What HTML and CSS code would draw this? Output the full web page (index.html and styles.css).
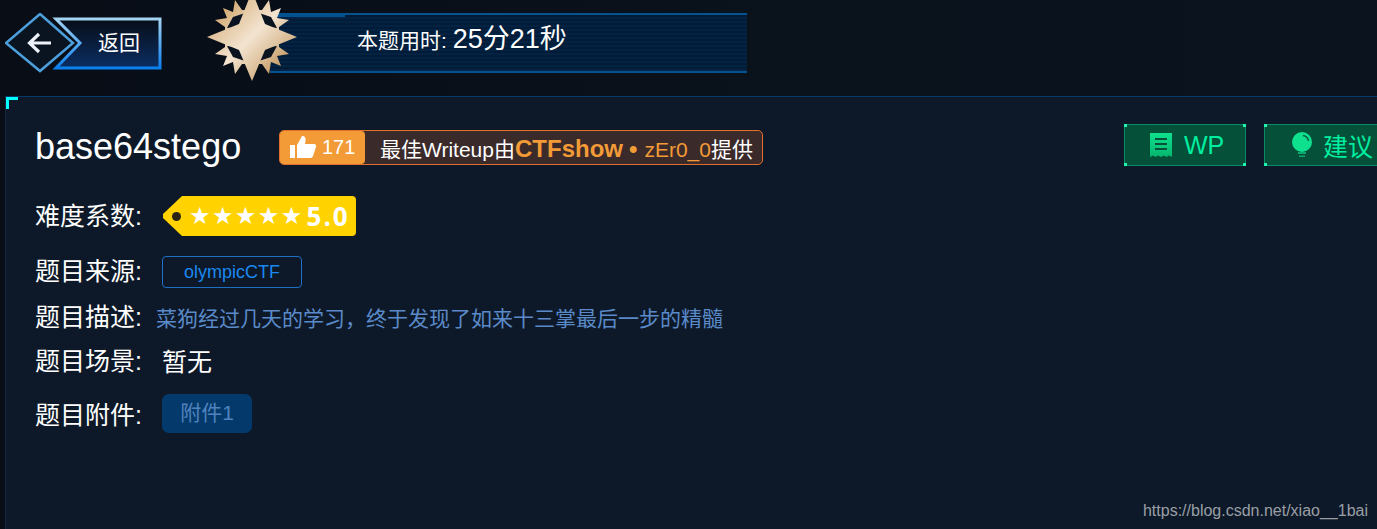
FILE: index.html
```html
<!DOCTYPE html>
<html lang="zh-CN">
<head>
  <meta charset="UTF-8" />
  <title>base64stego</title>
  <link rel="stylesheet" href="styles.css">
</head>
<body>

<header class="top">
  <a class="back">
    <svg class="back-shape" width="157" height="60" viewBox="0 0 157 60">
      <defs>
        <linearGradient id="backEdge" x1="0" y1="0" x2="0" y2="1">
          <stop offset="0" stop-color="#a5d4f2" />
          <stop offset="1" stop-color="#0a7fee" />
        </linearGradient>
        <linearGradient id="backFill" x1="0" y1="0" x2="0" y2="1">
          <stop offset="0" stop-color="#070d17" />
          <stop offset="1" stop-color="#0b2e63" />
        </linearGradient>
      </defs>
      <polygon points="51,6 155,6 155,55 51,55 75,30" fill="url(#backFill)" stroke="url(#backEdge)" stroke-width="3" />
      <polygon points="35,1 68,30 35,58 1,30" fill="#0a1420" stroke="#4d9fdc" stroke-width="2.5" />
      <path d="M24 30H46M34 21L24.500 30L34 39" fill="none" stroke="#eef2f8" stroke-width="3.200" />
    </svg>
    <span class="back-label">返回</span>
  </a>

  <div class="time-bar">
    <svg class="medal" width="92" height="86" viewBox="0 0 92 86">
      <defs>
        <linearGradient id="gold" x1="0.1" y1="0.1" x2="0.9" y2="0.9">
          <stop offset="0" stop-color="#d2a871" />
          <stop offset="0.5" stop-color="#f3e4d0" />
          <stop offset="1" stop-color="#c49a64" />
        </linearGradient>
      </defs>
      <polygon fill="url(#gold)" points="36,15 29,5 27,17 17,13 21,23 9,25 19,32 19,52 9,59 21,61 17,71 27,67 29,79 36,69 56,69 63,79 65,67 75,71 71,61 83,59 73,52 73,32 83,25 71,23 75,13 65,17 63,5 56,15" />
      <g fill="#0a1320">
        <polygon points="21,33 27,22 39,18 37,25 31,32" />
        <polygon points="71,33 65,22 53,18 55,25 61,32" />
        <polygon points="21,51 27,62 39,66 37,59 31,52" />
        <polygon points="71,51 65,62 53,66 55,59 61,52" />
      </g>
      <polygon fill="url(#gold)" points="46,-4 59,29 91,42 59,55 46,86 33,55 1,42 33,29" />
    </svg>
    <p class="time-text">本题用时: <span class="time-value">25分21秒</span></p>
  </div>
</header>

<main class="panel">
  <span class="corner"></span>

  <div class="title-row">
    <h1 class="title">base64stego</h1>
    <div class="writeup">
      <span class="likes">
        <svg width="28" height="24" viewBox="0 0 28 24">
          <path d="M1 10H6V23H1ZM8 10L13 1C16 1 17 3 16.500 6L16 9H25C27 9 27.500 11 27 12L24 21C23.500 22.500 22.500 23 21 23H8Z" fill="#fff" />
        </svg>
        171
      </span>
      <span class="writeup-text">最佳Writeup由<b class="team">CTFshow</b><b class="dot">•</b><span class="author">zEr0_0</span>提供</span>
    </div>
    <div class="actions">
      <a class="action action-wp">
        <svg width="22" height="24" viewBox="0 0 22 24">
          <defs>
            <linearGradient id="iconGreen" x1="0" y1="0" x2="0" y2="1">
              <stop offset="0" stop-color="#0ee08e" />
              <stop offset="1" stop-color="#06b56d" />
            </linearGradient>
          </defs>
          <path fill-rule="evenodd" fill="url(#iconGreen)" d="M0 0H22V24L19 22.500L16.500 24L14 22.500L11 24L8 22.500L5.500 24L3 22.500L0 24ZM5 5V7H17V5ZM5 10V12H17V10ZM5 15V17H17V15Z" />
        </svg>
        WP
      </a>
      <a class="action action-tip">
        <svg width="22" height="26" viewBox="0 0 22 26">
          <circle cx="11" cy="10" r="10" fill="#0ee08e" />
          <path d="M12 3.500A6.500 6.500 0 0 1 17.500 9" fill="none" stroke="#0a5a40" stroke-width="1.500" />
          <path d="M7 20H15V22H7ZM8 23.500H14V25H8Z" fill="#0aa66c" />
        </svg>
        建议
      </a>
    </div>
  </div>

  <div class="row row-level">
    <span class="label">难度系数:</span>
    <span class="level-tag">
      <i class="hole"></i>
      <span class="stars">★★★★★</span>
      <b class="score">5.0</b>
    </span>
  </div>

  <div class="row row-source">
    <span class="label">题目来源:</span>
    <a class="source">olympicCTF</a>
  </div>

  <div class="row row-desc">
    <span class="label">题目描述:</span>
    <span class="desc">菜狗经过几天的学习，终于发现了如来十三掌最后一步的精髓</span>
  </div>

  <div class="row row-scene">
    <span class="label">题目场景:</span>
    <span class="scene">暂无</span>
  </div>

  <div class="row row-file">
    <span class="label">题目附件:</span>
    <a class="file">附件1</a>
  </div>

  <span class="watermark">https://blog.csdn.net/xiao__1bai</span>
</main>

</body>
</html>
```

FILE: styles.css
```css
:root {
  --page-bg: #0d1928;
  --blue: #1a88f0;
  --orange: #f29b37;
  --green: #00eea0;
}

html, body {
  height: 100%;
}

body {
  margin: 0;
  height: 529px;
  overflow: hidden;
  font-family: "Liberation Sans", "Noto Sans CJK SC", sans-serif;
  background: linear-gradient(90deg, #080d16, #0a121c 60%, #0a131e);
  color: #fff;
}

.top {
  display: flex;
  height: 96px;
  padding: 13px 0 0 5px;
  box-sizing: border-box;
}

.back {
  position: relative;
  display: flex;
  justify-content: flex-end;
  width: 157px;
  height: 60px;
}

.back-shape {
  position: absolute;
  left: 0;
  top: 0;
}

.back-label {
  position: relative;
  width: 64px;
  font-size: 21px;
  line-height: 60px;
}

.time-bar {
  position: relative;
  width: 477px;
  height: 60px;
  margin-left: 108px;
  box-sizing: border-box;
  border-top: 2px solid #04528f;
  border-bottom: 2px solid #04528f;
  background: repeating-linear-gradient(0deg, #032345 0, #032345 2px, #021b36 2px, #021b36 4px);
}

.time-bar::before {
  content: "";
  position: absolute;
  left: 0;
  top: -2px;
  width: 75px;
  height: 4px;
  background-color: #04528f;
}

.medal {
  position: absolute;
  left: -64px;
  top: -20px;
}

.time-text {
  margin: 0;
  padding-left: 87px;
  font-size: 21px;
  line-height: 49px;
}

.time-value {
  font-size: 27px;
}

.panel {
  position: relative;
  height: 433px;
  margin-left: 5px;
  padding: 28px 0 0 29px;
  box-sizing: border-box;
  border-top: 1px solid #053a6a;
  border-left: 1px solid #12283f;
  background-color: var(--page-bg);
}

.corner {
  position: absolute;
  left: 0;
  top: 0;
  width: 9px;
  height: 9px;
  border-top: 3px solid #0ff;
  border-left: 3px solid #0ff;
}

.title-row {
  display: flex;
  align-items: center;
  height: 44px;
  margin-bottom: 27px;
}

.title {
  width: 244px;
  margin: 0;
  font-size: 36px;
  font-weight: normal;
}

.writeup {
  display: flex;
  align-items: stretch;
  height: 33px;
  border: 1px solid #e0702b;
  border-radius: 5px;
  background-color: #3b2a2a;
}

.likes {
  display: flex;
  align-items: center;
  gap: 5px;
  width: 85px;
  padding-left: 9px;
  box-sizing: border-box;
  border-radius: 4px;
  background-color: var(--orange);
  font-size: 20px;
}

.writeup-text {
  padding: 0 9px 0 15px;
  font-size: 21px;
  line-height: 35px;
}

.team {
  color: var(--orange);
  font-size: 24px;
}

.dot {
  margin: 0 7px 0 6px;
  color: var(--orange);
  font-size: 24px;
}

.author {
  color: var(--orange);
}

.actions {
  position: absolute;
  right: 0;
  top: 27px;
  display: flex;
  gap: 18px;
  width: 253px;
  overflow: hidden;
}

.action {
  position: relative;
  display: flex;
  flex: none;
  align-items: center;
  gap: 12px;
  width: 122px;
  height: 42px;
  padding-left: 25px;
  box-sizing: border-box;
  border: 1px solid #0b8a68;
  background-color: #045038;
  color: var(--green);
  font-size: 25px;
}

.action-tip {
  padding-left: 26px;
  gap: 10px;
}

/* bright corner ticks on the green buttons */
.action::before {
  content: "";
  position: absolute;
  top: -1px;
  right: -1px;
  bottom: -1px;
  left: -1px;
  background:
    linear-gradient(#1ff5b0, #1ff5b0) 0 0 / 3px 3px no-repeat,
    linear-gradient(#1ff5b0, #1ff5b0) 100% 0 / 3px 3px no-repeat,
    linear-gradient(#1ff5b0, #1ff5b0) 0 100% / 3px 3px no-repeat,
    linear-gradient(#1ff5b0, #1ff5b0) 100% 100% / 3px 3px no-repeat;
}

.row {
  display: flex;
  align-items: center;
}

.label {
  width: 127px;
  flex: none;
  margin-bottom: 4px;
  font-size: 25px;
}

.row-level {
  height: 40px;
  margin-bottom: 20px;
}

.level-tag {
  position: relative;
  display: flex;
  align-items: center;
  width: 194px;
  height: 40px;
  padding-left: 27px;
  box-sizing: border-box;
  background-color: #ffd200;
  clip-path: path("M1 18 L20 0 H190 Q194 0 194 4 V36 Q194 40 190 40 H20 L1 22 Z");
}

.hole {
  position: absolute;
  left: 10px;
  top: 16px;
  width: 9px;
  height: 9px;
  border-radius: 50%;
  background-color: #2a2414;
}

.stars {
  font-family: "DejaVu Sans", sans-serif;
  font-size: 24px;
  letter-spacing: 1.4px;
  white-space: nowrap;
}

.score {
  margin-left: 3px;
  font-family: "Open Sans", sans-serif;
  font-size: 26px;
  letter-spacing: 2px;
}

.row-source {
  height: 32px;
  margin-bottom: 13px;
}

.row-source .label {
  margin-bottom: 6px;
}

.source {
  width: 140px;
  height: 32px;
  box-sizing: border-box;
  border: 1px solid #1f6fc4;
  border-radius: 4px;
  color: var(--blue);
  font-size: 18px;
  line-height: 30px;
  text-align: center;
}

.row-desc {
  height: 32px;
  margin-bottom: 12px;
}

.row-desc .label {
  width: 121px;
}

.desc {
  color: #5a8ac8;
  font-size: 21px;
}

.row-scene {
  height: 32px;
  margin-bottom: 17px;
}

.scene {
  margin-bottom: 3px;
  font-size: 25px;
}

.row-file .label {
  margin-bottom: 2px;
}

.file {
  width: 90px;
  height: 39px;
  border-radius: 7px;
  background-color: #043a6b;
  color: #4f83bf;
  font-size: 21px;
  line-height: 37px;
  text-align: center;
}

.watermark {
  position: absolute;
  right: 9px;
  bottom: 9px;
  color: #9a9fa6;
  font-size: 16px;
}
```
